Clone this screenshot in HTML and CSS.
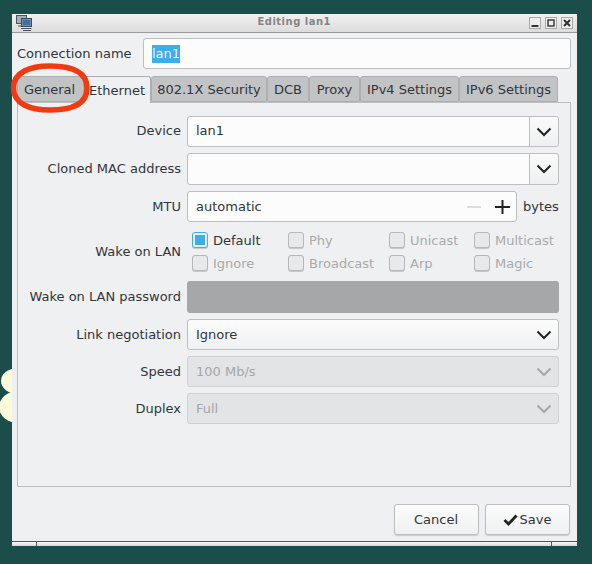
FILE: index.html
```html
<!DOCTYPE html>
<html lang="en">
<head>
<meta charset="utf-8">
<title>Editing lan1</title>
<link rel="stylesheet" href="styles.css">
</head>
<body>
<div class="blob blob-a"></div>
<div class="blob blob-b"></div>
<div class="window">
  <header class="titlebar">
    <svg class="app-icon" width="16" height="16" viewBox="0 0 16 16">
      <rect x="0.5" y="0.5" width="10" height="8" fill="#9fb0c4" stroke="#4a5560"/>
      <rect x="5.5" y="3.5" width="10" height="8" fill="#6f8fb5" stroke="#3f4a55"/>
      <rect x="7" y="5" width="7" height="5" fill="#3f6f9f"/>
      <path d="M5 13.5h10.5M2 11h3M7 15.5h8" stroke="#4a5560" fill="none"/>
    </svg>
    <span class="title">Editing lan1</span>
    <div class="win-buttons">
      <span class="win-btn"><svg width="10" height="10" viewBox="0 0 10 10"><path d="M1.500 8h7" stroke="#333" stroke-width="2"/></svg></span>
      <span class="win-btn"><svg width="10" height="10" viewBox="0 0 10 10"><rect x="2" y="2" width="6" height="6" fill="none" stroke="#333" stroke-width="1.400"/></svg></span>
      <span class="win-btn"><svg width="10" height="10" viewBox="0 0 10 10"><path d="M2 2l6 6M8 2l-6 6" stroke="#333" stroke-width="2"/></svg></span>
    </div>
  </header>
  <div class="content">
    <div class="name-row">
      <label class="name-label">Connection name</label>
      <div class="field name-field"><span class="selected">lan1</span></div>
    </div>
    <nav class="tabs">
      <span class="tab tab-general">General</span>
      <span class="tab tab-active tab-ethernet">Ethernet</span>
      <span class="tab tab-security">802.1X Security</span>
      <span class="tab tab-dcb">DCB</span>
      <span class="tab tab-proxy">Proxy</span>
      <span class="tab tab-ipv4">IPv4 Settings</span>
      <span class="tab tab-ipv6">IPv6 Settings</span>
    </nav>
    <section class="panel">
      <div class="label h31 raise">Device</div>
      <div class="field combo h31"><span class="combo-text raise">lan1</span><span class="combo-btn"><svg class="chev" width="16" height="10" viewBox="0 0 16 10"><path d="M1.500 1.500L8 8l6.500-6.500" fill="none" stroke="#222" stroke-width="2"/></svg></span></div>

      <div class="label h32 raise">Cloned MAC address</div>
      <div class="field combo h32"><span class="combo-text"></span><span class="combo-btn"><svg class="chev" width="16" height="10" viewBox="0 0 16 10"><path d="M1.500 1.500L8 8l6.500-6.500" fill="none" stroke="#222" stroke-width="2"/></svg></span></div>

      <div class="label h31">MTU</div>
      <div class="mtu h31">
        <div class="field spin">
          <span class="combo-text">automatic</span>
          <svg class="spin-icons" width="50" height="16" viewBox="0 0 50 16"><path d="M6 8h14" stroke="#dcdddf" stroke-width="2"/><path d="M34 8h15M41.500 1v14" stroke="#222" stroke-width="2"/></svg>
        </div>
        <span class="unit">bytes</span>
      </div>

      <div class="label wol-label">Wake on LAN</div>
      <div class="wol">
        <label class="check on"><span class="box"><span class="box-fill"></span></span>Default</label>
        <label class="check"><span class="box"></span>Phy</label>
        <label class="check"><span class="box"></span>Unicast</label>
        <label class="check"><span class="box"></span>Multicast</label>
        <label class="check"><span class="box"></span>Ignore</label>
        <label class="check"><span class="box"></span>Broadcast</label>
        <label class="check"><span class="box"></span>Arp</label>
        <label class="check"><span class="box"></span>Magic</label>
      </div>

      <div class="label h32 raise">Wake on LAN password</div>
      <div class="password h32"></div>

      <div class="label h31">Link negotiation</div>
      <div class="dropdown h31"><span>Ignore</span><svg width="16" height="10" viewBox="0 0 16 10"><path d="M1.500 1.500L8 8l6.500-6.500" fill="none" stroke="#222" stroke-width="2"/></svg></div>

      <div class="label h31">Speed</div>
      <div class="dropdown disabled h31"><span>100 Mb/s</span><svg width="16" height="10" viewBox="0 0 16 10"><path d="M1.500 1.500L8 8l6.500-6.500" fill="none" stroke="#a5a6a8" stroke-width="2"/></svg></div>

      <div class="label h31">Duplex</div>
      <div class="dropdown disabled h31"><span>Full</span><svg width="16" height="10" viewBox="0 0 16 10"><path d="M1.500 1.500L8 8l6.500-6.500" fill="none" stroke="#a5a6a8" stroke-width="2"/></svg></div>
    </section>
    <footer class="actions">
      <button class="btn" type="button">Cancel</button>
      <button class="btn" type="button"><svg width="15" height="12" viewBox="0 0 15 12"><path d="M1.500 6l4 4 8-8.500" fill="none" stroke="#222" stroke-width="2.800"/></svg>Save</button>
    </footer>
  </div>
  <div class="statusbar"><span class="cell-a"></span><span class="cell-b"></span><span class="cell-c"></span></div>
</div>
<svg class="annotation" width="592" height="564" viewBox="0 0 592 564"><path d="M13.500 88C13.500 72 30 66 50 66C72 66 87 72 87 88C87 104 72 110 50 110C30 110 13.500 104 13.500 88Z" fill="none" stroke="#f23a12" stroke-width="5.500"/></svg>
</body>
</html>
```
FILE: styles.css
```css
* { box-sizing: border-box; }
html, body { margin: 0; height: 100%; }
body {
  position: relative;
  width: 592px;
  height: 564px;
  overflow: hidden;
  background: #1b4d4a;
  padding: 14px 0 0 12px;
  font-family: "DejaVu Sans", sans-serif;
  font-size: 13px;
  color: #31363b;
}
.blob { position: absolute; background: #fbfbd9; border-radius: 50%; }
.blob-a { left: 1px; top: 368px; width: 34px; height: 26px; }
.blob-b { left: -1px; top: 391px; width: 38px; height: 32px; }
.window {
  position: relative;
  width: 564.500px;
  height: 532px;
  background: #eff0f1;
  display: flex;
  flex-direction: column;
}
.titlebar {
  height: 19px;
  display: flex;
  align-items: center;
  position: relative;
  background: linear-gradient(#f1f1f1, #dcdcdc);
  border-bottom: 1px solid #9a9a9a;
  padding: 0 4px;
}
.app-icon { flex: none; }
.title {
  position: absolute;
  left: 0; right: 0;
  top: 1px;
  line-height: 14px;
  text-align: center;
  font-size: 10px;
  font-weight: bold;
  letter-spacing: 0.5px;
  color: #858585;
}
.win-buttons { margin-left: auto; display: flex; gap: 4px; position: relative; }
.win-btn {
  width: 12px; height: 12px;
  border: 1px solid #aaa;
  background: #eee;
  display: flex;
}
.content { flex: 1; padding: 5px 6px 0 5px; display: flex; flex-direction: column; min-height: 0; }
.name-row { display: flex; align-items: flex-start; height: 32px; }
.name-label { width: 126px; flex: none; line-height: 31px; }
.field {
  background: #fcfcfc;
  border: 1px solid #bcbebf;
  border-radius: 3px;
  display: flex;
  align-items: center;
}
.name-field { flex: 1; height: 31px; padding-left: 8px; }
.selected { background: #3daee9; color: #eff0f1; padding: 1px 0; line-height: 16px; }
.tabs { display: flex; height: 26px; margin-top: 6px; align-items: flex-end; position: relative; }
.tab {
  height: 26px;
  background: #c2c3c5;
  border: 1px solid #adaeb0;
  border-radius: 3px 3px 0 0;
  display: flex;
  align-items: center;
  justify-content: center;
  flex: none;
}
.tab-active { background: #eff0f1; height: 27px; margin-bottom: -1px; border-bottom: 0; }
.tab-general { width: 66px; border-right: 0; padding-right: 2px; }
.tab-ethernet { width: 68px; }
.tab-security { width: 116px; }
.tab-dcb { width: 42px; }
.tab-proxy { width: 51px; }
.tab-ipv4 { width: 99px; }
.tab-ipv6 { width: 99px; }
.panel {
  height: 385px;
  border: 1px solid #bcbebf;
  padding: 13px 11px 0 11px;
  display: grid;
  grid-template-columns: 152px 372px;
  column-gap: 6px;
  row-gap: 6px;
  align-content: start;
  background: #eff0f1;
}
.label { display: flex; align-items: center; justify-content: flex-end; white-space: nowrap; }
.raise { padding-bottom: 2px; }
.h31 { height: 31px; }
.h32 { height: 32px; }
.combo { align-items: stretch; }
.combo-text { flex: 1; display: flex; align-items: center; padding-left: 8px; }
.combo-btn {
  width: 29px;
  flex: none;
  border-left: 1px solid #bcbebf;
  background: linear-gradient(#fafafa, #eff0f1);
  border-radius: 0 3px 3px 0;
  display: flex;
  align-items: center;
  justify-content: center;
}
.mtu { display: flex; align-items: center; gap: 6px; }
.spin { width: 330px; flex: none; height: 31px; padding-right: 5px; }
.spin-icons { flex: none; }
.unit { white-space: nowrap; }
.wol-label { height: 47px; }
.wol {
  height: 47px;
  padding: 0.5px 0 0 5px;
  display: grid;
  grid-template-columns: 96px 101px 85px 1fr;
  grid-template-rows: 23px 23px;
  align-items: center;
}
.check { display: flex; align-items: center; gap: 5px; color: #a9aaac; white-space: nowrap; }
.check.on { color: #31363b; }
.box {
  width: 16px; height: 16px; flex: none;
  background: #e8e9ea;
  border: 1px solid #b5b7b8;
  border-radius: 3px;
  box-shadow: 0 1px 0 #c6c7c8;
  display: flex;
  padding: 2px;
}
.check.on .box { border-color: #3daee9; background: #eff0f1; }
.box-fill { flex: 1; background: #3daee9; }
.password { background: #a6a7a9; border-radius: 3px; }
.dropdown {
  display: flex;
  align-items: center;
  justify-content: space-between;
  padding: 0 6px 0 8px;
  background: linear-gradient(#fcfcfc, #f0f1f2);
  border: 1px solid #bcbebf;
  border-radius: 3px;
}
.dropdown.disabled { background: #e3e4e5; border-color: #cfd0d1; color: #a5a6a8; }
.actions { display: flex; justify-content: flex-end; gap: 6px; margin-top: 17px; padding-right: 1px; }
.btn {
  width: 85px;
  height: 31px;
  font: inherit;
  color: inherit;
  display: flex;
  align-items: center;
  justify-content: center;
  gap: 2px;
  background: linear-gradient(#fcfcfc, #eff0f1);
  border: 1px solid #bcbebf;
  border-radius: 3px;
  box-shadow: 0 1px 1px #c8c9ca;
  padding: 0;
}
.statusbar {
  height: 5px;
  display: flex;
  border-top: 1px solid #555;
  background: linear-gradient(#fafafa, #d8d8d8);
  margin-top: auto;
}
.cell-a { width: 25px; border-right: 1px solid #555; }
.cell-b { flex: 1; }
.cell-c { width: 26px; border-left: 1px solid #555; }
.annotation { position: absolute; left: 0; top: 0; pointer-events: none; }
```
